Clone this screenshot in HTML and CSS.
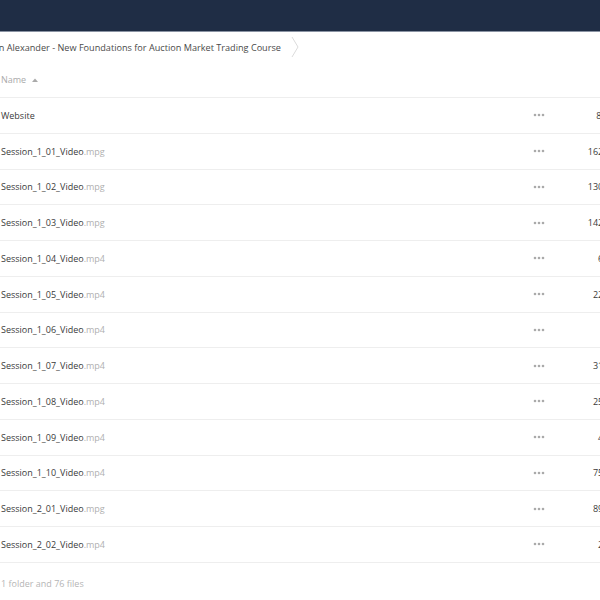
FILE: index.html
```html
<!DOCTYPE html>
<html>
<head>
<meta charset="utf-8">
<link rel="stylesheet" href="styles.css">
</head>
<body>
<div class="page">
  <header class="topbar"></header>
  <nav class="crumbs">
    <span class="crumb">Dalton Alexander - New Foundations for Auction Market Trading Course</span>
    <svg class="chev" width="8" height="22" viewBox="0 0 8 22"><polyline points="1,1 7,11 1,21" fill="none" stroke="#dcdcdc" stroke-width="1"/></svg>
  </nav>
  <div class="thead">
    <span class="th-name">Name</span>
    <svg class="caret" width="6" height="4" viewBox="0 0 6 4"><polygon points="0,4 3,0.5 6,4" fill="#aaa"/></svg>
  </div>
  <div class="list">
    <div class="row"><span class="name">Website</span><span class="more"><svg width="12" height="4" viewBox="0 0 12 4"><circle cx="2" cy="2" r="1.3"/><circle cx="6" cy="2" r="1.3"/><circle cx="10" cy="2" r="1.3"/></svg></span><span class="size">8 items</span></div>
    <div class="row"><span class="name">Session_1_01_Video<span class="ext">.mpg</span></span><span class="more"><svg width="12" height="4" viewBox="0 0 12 4"><circle cx="2" cy="2" r="1.3"/><circle cx="6" cy="2" r="1.3"/><circle cx="10" cy="2" r="1.3"/></svg></span><span class="size">162.4 MB</span></div>
    <div class="row"><span class="name">Session_1_02_Video<span class="ext">.mpg</span></span><span class="more"><svg width="12" height="4" viewBox="0 0 12 4"><circle cx="2" cy="2" r="1.3"/><circle cx="6" cy="2" r="1.3"/><circle cx="10" cy="2" r="1.3"/></svg></span><span class="size">130.6 MB</span></div>
    <div class="row"><span class="name">Session_1_03_Video<span class="ext">.mpg</span></span><span class="more"><svg width="12" height="4" viewBox="0 0 12 4"><circle cx="2" cy="2" r="1.3"/><circle cx="6" cy="2" r="1.3"/><circle cx="10" cy="2" r="1.3"/></svg></span><span class="size">142.1 MB</span></div>
    <div class="row"><span class="name">Session_1_04_Video<span class="ext">.mp4</span></span><span class="more"><svg width="12" height="4" viewBox="0 0 12 4"><circle cx="2" cy="2" r="1.3"/><circle cx="6" cy="2" r="1.3"/><circle cx="10" cy="2" r="1.3"/></svg></span><span class="size">6.8 MB</span></div>
    <div class="row"><span class="name">Session_1_05_Video<span class="ext">.mp4</span></span><span class="more"><svg width="12" height="4" viewBox="0 0 12 4"><circle cx="2" cy="2" r="1.3"/><circle cx="6" cy="2" r="1.3"/><circle cx="10" cy="2" r="1.3"/></svg></span><span class="size">22.3 MB</span></div>
    <div class="row"><span class="name">Session_1_06_Video<span class="ext">.mp4</span></span><span class="more"><svg width="12" height="4" viewBox="0 0 12 4"><circle cx="2" cy="2" r="1.3"/><circle cx="6" cy="2" r="1.3"/><circle cx="10" cy="2" r="1.3"/></svg></span><span class="size">1 MB</span></div>
    <div class="row"><span class="name">Session_1_07_Video<span class="ext">.mp4</span></span><span class="more"><svg width="12" height="4" viewBox="0 0 12 4"><circle cx="2" cy="2" r="1.3"/><circle cx="6" cy="2" r="1.3"/><circle cx="10" cy="2" r="1.3"/></svg></span><span class="size">31.7 MB</span></div>
    <div class="row"><span class="name">Session_1_08_Video<span class="ext">.mp4</span></span><span class="more"><svg width="12" height="4" viewBox="0 0 12 4"><circle cx="2" cy="2" r="1.3"/><circle cx="6" cy="2" r="1.3"/><circle cx="10" cy="2" r="1.3"/></svg></span><span class="size">25.2 MB</span></div>
    <div class="row"><span class="name">Session_1_09_Video<span class="ext">.mp4</span></span><span class="more"><svg width="12" height="4" viewBox="0 0 12 4"><circle cx="2" cy="2" r="1.3"/><circle cx="6" cy="2" r="1.3"/><circle cx="10" cy="2" r="1.3"/></svg></span><span class="size">4.4 MB</span></div>
    <div class="row"><span class="name">Session_1_10_Video<span class="ext">.mp4</span></span><span class="more"><svg width="12" height="4" viewBox="0 0 12 4"><circle cx="2" cy="2" r="1.3"/><circle cx="6" cy="2" r="1.3"/><circle cx="10" cy="2" r="1.3"/></svg></span><span class="size">75.9 MB</span></div>
    <div class="row"><span class="name">Session_2_01_Video<span class="ext">.mpg</span></span><span class="more"><svg width="12" height="4" viewBox="0 0 12 4"><circle cx="2" cy="2" r="1.3"/><circle cx="6" cy="2" r="1.3"/><circle cx="10" cy="2" r="1.3"/></svg></span><span class="size">89.5 MB</span></div>
    <div class="row"><span class="name">Session_2_02_Video<span class="ext">.mp4</span></span><span class="more"><svg width="12" height="4" viewBox="0 0 12 4"><circle cx="2" cy="2" r="1.3"/><circle cx="6" cy="2" r="1.3"/><circle cx="10" cy="2" r="1.3"/></svg></span><span class="size">2.6 MB</span></div>
  </div>
  <div class="footer">1 folder and 76 files</div>
</div>
</body>
</html>
```
FILE: styles.css
```css
html, body {
  margin: 0;
  padding: 0;
  overflow: hidden;
  background: #fff;
}
body {
  width: 600px;
  height: 600px;
  font-family: "Open Sans", "Liberation Sans", sans-serif;
  font-size: 9px;
  color: #3a3a3a;
}
.page {
  width: 640px;
}
.topbar {
  height: 31px;
  background: #1f2d45;
  border-bottom: 1px solid #8a93a3;
}
.crumbs {
  display: flex;
  align-items: center;
  height: 30px;
  margin-left: -24px;
}
.crumb {
  font-size: 9.15px;
  color: #4a4a4a;
}
.chev {
  margin-left: 10px;
}
.thead {
  display: flex;
  align-items: center;
  height: 35px;
  padding-left: 1px;
  border-bottom: 1px solid #eee;
  color: #aaa;
}
.caret {
  margin-left: 6px;
}
.row {
  display: flex;
  align-items: center;
  height: 34.75px;
  border-bottom: 1px solid #eee;
  padding-left: 1px;
}
.name {
  width: 532px;
  color: #3a3a3a;
}
.ext {
  color: #b0b0b0;
}
.more {
  width: 40px;
  display: flex;
  align-items: center;
}
.more svg {
  fill: #aaa;
}
.size {
  width: 54px;
  text-align: right;
  color: #3a3a3a;
}
.footer {
  padding: 14px 0 0 1px;
  color: #b5b5b5;
}
```
